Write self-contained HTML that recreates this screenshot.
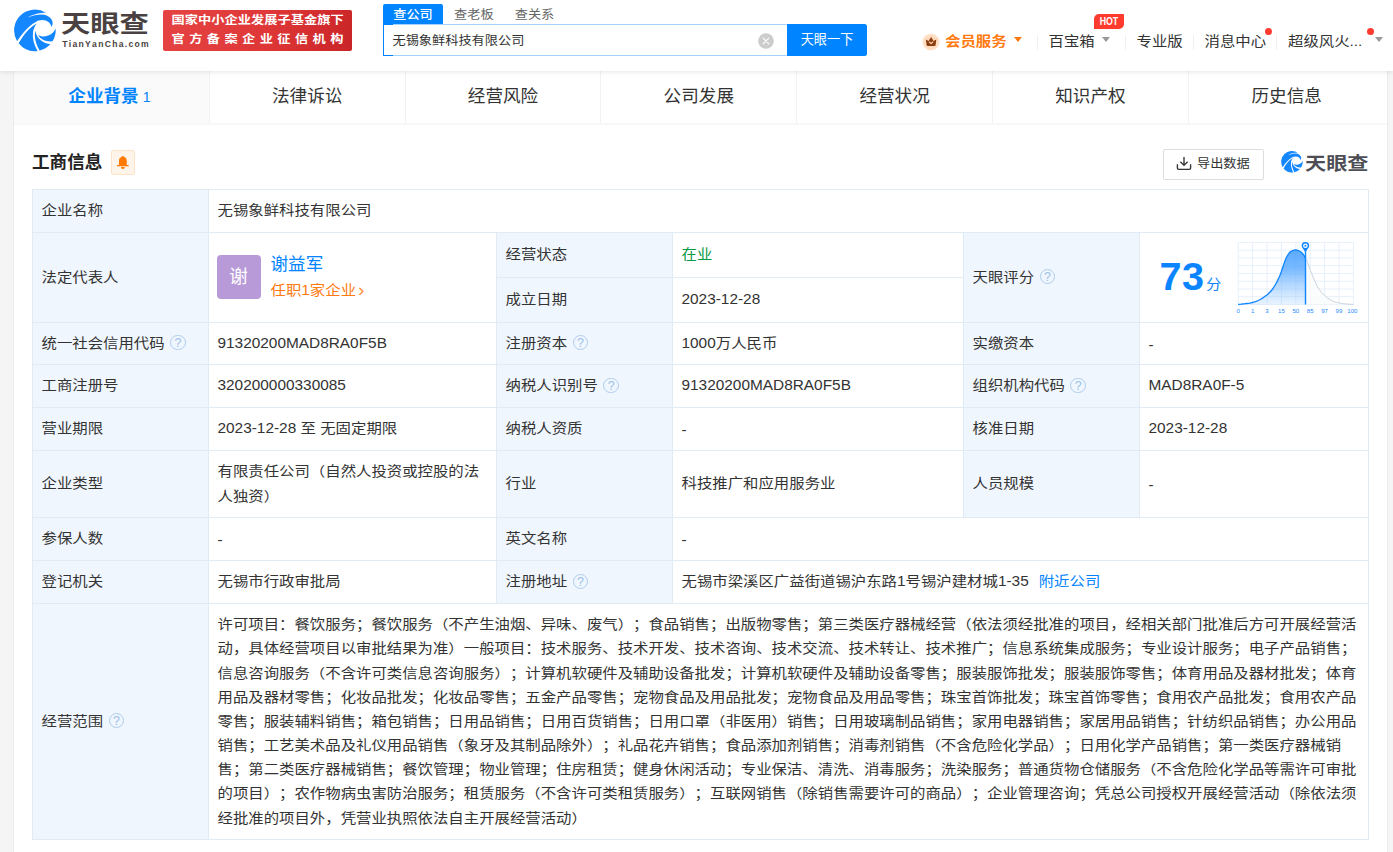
<!DOCTYPE html>
<html lang="zh-CN">
<head>
<meta charset="utf-8">
<title>无锡象鲜科技有限公司 - 天眼查</title>
<style>
*,*:before,*:after{box-sizing:border-box;margin:0;padding:0}
html,body{width:1393px;height:852px;overflow:hidden}
body{background:#f5f5f5;font-family:"Liberation Sans","Noto Sans CJK SC",sans-serif;color:#333;font-size:15.4px;position:relative;text-spacing-trim:space-all;font-kerning:none}
a{text-decoration:none;color:inherit}
.abs{position:absolute}

/* ---------- header ---------- */
#header{position:absolute;left:0;top:0;width:1393px;height:71px;background:#fff;box-shadow:0 1px 5px rgba(0,0,0,.10);z-index:5}
#logo-mark{position:absolute;left:8px;top:4px;width:54px;height:54px}
#logo-cn{position:absolute;left:60.8px;top:5.8px;font-size:24.4px;line-height:36px;font-weight:700;color:#4a4242;letter-spacing:0;white-space:nowrap;transform:scaleX(1.2);transform-origin:0 0}
#logo-en{position:absolute;left:62.3px;top:38px;font-size:8.6px;line-height:12px;font-weight:700;color:#4a4242;letter-spacing:1.28px;white-space:nowrap}
#badge{position:absolute;left:163px;top:10px;width:189px;height:41px;border-radius:2px;background:linear-gradient(105deg,#e54343 0%,#df3737 55%,#c92427 100%);color:#fff;font-weight:700;font-size:13.2px;white-space:nowrap}
#badge .l1{position:absolute;left:8.5px;top:2.2px;line-height:17px;letter-spacing:.06px;transform:scaleY(.87);transform-origin:0 20%}
#badge .l2{position:absolute;left:8.5px;top:21.3px;line-height:17px;letter-spacing:4.45px;transform:scaleY(.87);transform-origin:0 20%}

#stabs{position:absolute;left:383px;top:4px;height:20px;font-size:13.2px;line-height:21px;white-space:nowrap}
#stabs>span{display:inline-block;width:60.6px;text-align:center;color:#666;vertical-align:top}
#stabs>span.on{background:#0084ff;color:#fff;border-radius:2px 2px 0 0;font-weight:500;width:60px;margin-right:.6px}
#sbox{position:absolute;left:383px;top:24px;width:405px;height:32px;border:1px solid #a6d2ff;border-left-color:#0084ff;background:#fff;font-size:13.2px;line-height:32.5px;padding-left:8.5px;color:#333}
#sbox:before{content:"";position:absolute;left:-1px;top:-1px;width:10px;height:32px;border:1px solid #0084ff;border-right:none}
#sclear{position:absolute;left:757.9px;top:32.5px;width:16px;height:16px}
#sbtn{position:absolute;left:787px;top:24px;width:80px;height:32px;background:#0084ff;border-radius:0 2.5px 2.5px 0;color:#fff;font-size:13.2px;line-height:32px;text-align:center}

#nav{position:absolute;left:0;top:0;font-size:15.4px;line-height:22px;white-space:nowrap}
#nav .t{position:absolute;top:30px}
#nav .sep{position:absolute;top:35px;width:1.3px;height:15px;background:#efefef}
#nav .tri{position:absolute;top:37.4px;margin-left:-.3px;width:0;height:0;border-left:4.9px solid transparent;border-right:4.9px solid transparent;border-top:5.9px solid #999}
#nav .dot{position:absolute;width:7px;height:7px;border-radius:50%;background:#ff3b30}
#hot{position:absolute;left:1094px;top:14px;width:30px;height:14.8px;background:#ff3b30;border-radius:5px 1px 5px 0;color:#fff;font-size:8.8px;line-height:14.8px;font-weight:700;text-align:center;letter-spacing:-.1px}
#hot span{display:inline-block;transform:translateY(.4px) scaleY(1.2);transform-origin:50% 60%}

/* ---------- container ---------- */
#wrap{position:absolute;left:13px;top:71px;width:1375px;height:781px;background:#fff;border-left:1px solid #ececec;border-right:1px solid #ececec}
#tabs{position:absolute;left:0;top:0;width:1373px;height:54px;border-bottom:2px solid #f8f8f8;display:flex}
#tabs div{flex:0 0 195.8px;height:52px;border-right:1px solid #f2f2f2;text-align:center;font-size:17.6px;line-height:50px;color:#333;white-space:nowrap}
#tabs div:last-child{border-right:none}
#tabs div.on{background:#fafafa;color:#0084ff;font-weight:700;padding-right:4px}
#tabs div.on small{font-size:14px;font-weight:400;margin-left:4px;position:relative;top:0}

#sec-title{position:absolute;left:18px;top:78px;font-size:17.6px;line-height:26px;font-weight:700;color:#222;white-space:nowrap}
#bell{position:absolute;left:97px;top:79px;width:24px;height:25px;background:#fff4e9;border:1px solid #ffe3c8;border-radius:2px}
#export{position:absolute;left:1149px;top:78px;width:101px;height:31px;border:1px solid #ddd;border-radius:2px;font-size:13.2px;line-height:28px;color:#333;white-space:nowrap}
#wm{position:absolute;left:1266px;top:79px;width:90px;height:26px}
#wm span{position:absolute;left:25px;top:-1.5px;font-size:17.7px;line-height:30px;font-weight:700;color:#4d4e55;letter-spacing:0;white-space:nowrap;transform:scaleX(1.195);transform-origin:0 0}

/* ---------- table ---------- */
#tb{position:absolute;left:18px;top:118px;width:1336px;border-collapse:collapse;table-layout:fixed;font-size:15.4px;line-height:24.2px;color:#333}
#tb td{border:1px solid #e1ebf5;padding:0 8.5px 1px;vertical-align:middle;word-break:break-all}
#tb td.k{background:#f0f6fd}
.q{display:inline-block;width:15.4px;height:15.4px;border:1.4px solid #aecdee;border-radius:50%;color:#9bc1e9;font-size:12.5px;line-height:15.6px;text-align:center;vertical-align:middle;margin-left:5.6px;position:relative;top:-1.1px;overflow:hidden;font-style:normal;font-family:"Liberation Sans",sans-serif}
.blue{color:#0084ff}

.av{position:absolute;left:7.5px;top:21.6px;width:44px;height:44px;border-radius:4px;background:#b99ad9;color:#fff;font-size:18.6px;line-height:44px;text-align:center}
.nm{position:absolute;left:61.5px;top:18px;font-size:17.6px;line-height:26px;white-space:nowrap}
.job{position:absolute;left:61.5px;top:45px;font-size:15.4px;line-height:24px;color:#ff7a10;white-space:nowrap}
.job .ar{margin-left:2px;font-size:19px;line-height:10px;position:relative;top:.5px;opacity:.85}
.score{position:absolute;left:19.5px;top:20px;font-size:39.6px;line-height:46px;font-weight:700;color:#0a84ff;letter-spacing:.6px;font-family:"Liberation Sans",sans-serif}
.fen{position:absolute;left:66px;top:40px;font-size:15.4px;line-height:22px;color:#0f86ff}
.chart{position:absolute;left:94px;top:5px}
.scope{padding-right:9px}

.c{display:inline-block;line-height:1;white-space:nowrap;transform:translateY(-.4px) scaleY(.865);transform-origin:0 84.6%}
.c9{display:inline-block;line-height:1;white-space:nowrap;transform:scaleY(.93);transform-origin:0 84.6%}
.ln{height:24.2px;white-space:nowrap}
.d{position:relative;top:1.7px}
</style>
</head>
<body>
<div id="header">
  <svg id="logo-mark" viewBox="0 0 852 852">
    <g fill="#1487ff">
      <path d="M144,586 A328,328 0 0 1 600.6,139 C520,138 400,158 310,213 C420,170 540,152 610,180 C690,215 732,290 686,364 C674,300 620,254 540,254 C500,254 468,266 438,283 C328,343 216,470 144,586Z"/>
      <path d="M168,620 A328,328 0 0 0 466,741.5 C408,640 382,540 395,440 C402,392 424,342 456,306 C342,364 236,494 168,620Z"/>
      <path d="M499,735.5 A328,328 0 0 0 668,636 C560,630 452,550 430,424 C418,472 420,540 443,610 C458,655 478,697 499,735.5Z"/>
      <path d="M474,488 C560,538 700,508 751.8,388 A328,328 0 0 1 703.7,589 C602,598 512,558 474,488Z"/>
    </g>
  </svg>
  <div id="logo-cn">天眼查</div>
  <div id="logo-en">TianYanCha.com</div>
  <div id="badge"><span class="l1">国家中小企业发展子基金旗下</span><span class="l2">官方备案企业征信机构</span></div>

  <div id="stabs"><span class="on"><span class="c9">查公司</span></span><span><span class="c9">查老板</span></span><span><span class="c9">查关系</span></span></div>
  <div id="sbox"><span class="c9">无锡象鲜科技有限公司</span></div>
  <svg id="sclear" viewBox="0 0 16 16"><circle cx="8" cy="8" r="7.8" fill="#ccc"/><path d="M5.2,5.2 L10.8,10.8 M10.8,5.2 L5.2,10.8" stroke="#fff" stroke-width="1.2" stroke-linecap="round"/></svg>
  <div id="sbtn">天眼一下</div>

  <div id="nav">
    <svg class="abs" style="left:922px;top:33px;width:18px;height:18px" viewBox="0 0 18 18"><defs><radialGradient id="vg"><stop offset="0" stop-color="#ffd6b5"/><stop offset=".75" stop-color="#ffdcc0"/><stop offset="1" stop-color="#ffe6d2"/></radialGradient></defs><circle cx="9" cy="9" r="8.6" fill="url(#vg)"/><path d="M3.9,6.5 L6.6,8.1 L9.1,4.1 L11.6,8.1 L14.3,6.5 L13.6,12 Q13.5,13.1 12.4,13.1 L5.8,13.1 Q4.7,13.1 4.6,12Z" fill="#8a3c0e"/><path d="M7.4,9 L9.1,10.6 L10.8,9" fill="none" stroke="#ffd9bb" stroke-width="1.1" stroke-linecap="round" stroke-linejoin="round"/></svg>
    <span class="t" style="left:945px;color:#ff7a10;font-weight:700"><span class="c">会员服务</span></span>
    <i class="tri" style="left:1014.6px;border-top-color:#ff7a10"></i>
    <i class="sep" style="left:1037px"></i>
    <span class="t" style="left:1048.5px"><span class="c">百宝箱</span></span>
    <i class="tri" style="left:1102.4px"></i>
    <div id="hot"><span>HOT</span></div>
    <i class="sep" style="left:1124.5px"></i>
    <span class="t" style="left:1136.5px"><span class="c">专业版</span></span>
    <i class="sep" style="left:1193px"></i>
    <span class="t" style="left:1204.5px"><span class="c">消息中心</span></span>
    <i class="dot" style="left:1265px;top:28px"></i>
    <i class="sep" style="left:1276px"></i>
    <span class="t" style="left:1288px"><span class="c">超级风火...</span></span>
    <i class="dot" style="left:1367px;top:27.5px"></i>
    <i class="tri" style="left:1374.8px"></i>
  </div>
</div>

<div id="wrap">
  <div id="tabs">
    <div class="on">企业背景<small>1</small></div>
    <div>法律诉讼</div>
    <div>经营风险</div>
    <div>公司发展</div>
    <div>经营状况</div>
    <div>知识产权</div>
    <div>历史信息</div>
  </div>

  <div id="sec-title">工商信息</div>
  <div id="bell"><svg viewBox="0 0 24 24" width="22" height="22" style="display:block"><path d="M11.85,5.1 L13.1,6.2 C15.2,6.9 16.1,8.6 16.1,10.6 L16.1,15.3 L18.2,15.3 L18.2,16.55 L5.4,16.55 L5.4,15.3 L7.6,15.3 L7.6,10.6 C7.6,8.6 8.5,6.9 10.6,6.2Z" fill="#ff7a00"/><path d="M9.7,17.45 L14,17.45 A2.15,2.15 0 0 1 9.7,17.45Z" fill="#ff7a00"/></svg></div>
  <div id="export"><svg class="abs" style="left:12px;top:5.6px" width="16" height="15" viewBox="0 0 16 15"><path d="M8,1 V9.2 M4.4,5.8 L8,9.4 L11.6,5.8 M1.4,8.2 V12 Q1.4,13.4 2.8,13.4 H13.2 Q14.6,13.4 14.6,12 V8.2" fill="none" stroke="#333" stroke-width="1.35"/></svg><span class="abs" style="left:33px;top:0"><span class="c9">导出数据</span></span></div>
  <div id="wm">
    <svg class="abs" style="left:0;top:0;width:24px;height:24px" viewBox="60 60 730 730"><g fill="#1487ff">
      <path d="M144,586 A328,328 0 0 1 600.6,139 C520,138 400,158 310,213 C420,170 540,152 610,180 C690,215 732,290 686,364 C674,300 620,254 540,254 C500,254 468,266 438,283 C328,343 216,470 144,586Z"/>
      <path d="M168,620 A328,328 0 0 0 466,741.5 C408,640 382,540 395,440 C402,392 424,342 456,306 C342,364 236,494 168,620Z"/>
      <path d="M499,735.5 A328,328 0 0 0 668,636 C560,630 452,550 430,424 C418,472 420,540 443,610 C458,655 478,697 499,735.5Z"/>
      <path d="M474,488 C560,538 700,508 751.8,388 A328,328 0 0 1 703.7,589 C602,598 512,558 474,488Z"/></g></svg>
    <span>天眼查</span>
  </div>

  <table id="tb">
    <colgroup><col style="width:176px"><col style="width:288px"><col style="width:176px"><col style="width:291px"><col style="width:176px"><col style="width:229px"></colgroup>
    <tr style="height:43px"><td class="k"><span class="c">企业名称</span></td><td colspan="5"><span class="c">无锡象鲜科技有限公司</span></td></tr>
    <tr style="height:45px"><td class="k" rowspan="2"><span class="c">法定代表人</span></td>
      <td rowspan="2" style="position:relative"><div class="av">谢</div><div class="nm blue">谢益军</div><div class="job"><span class="c">任职</span>1<span class="c">家企业</span><span class="ar">›</span></div></td>
      <td class="k"><span class="c">经营状态</span></td><td style="color:#089944"><span class="c">在业</span></td>
      <td class="k" rowspan="2"><span class="c">天眼评分</span><i class="q">?</i></td>
      <td rowspan="2" style="position:relative;padding:0">
        <div class="score">73</div><div class="fen"><span class="c">分</span></div>
        <svg class="chart" width="130" height="84" viewBox="0 0 130 84">
          <defs><linearGradient id="gf" x1="0" y1="0" x2="0" y2="1"><stop offset="0" stop-color="#3d9bff" stop-opacity=".85"/><stop offset=".35" stop-color="#4ea4ff" stop-opacity=".75"/><stop offset="1" stop-color="#8cc4ff" stop-opacity=".2"/></linearGradient></defs>
          <g stroke="#e7f0fb" stroke-width="1" fill="none"><path d="M4.2,4.4 V66.5"/><path d="M18.6,4.4 V66.5"/><path d="M33.0,4.4 V66.5"/><path d="M47.4,4.4 V66.5"/><path d="M61.8,4.4 V66.5"/><path d="M76.2,4.4 V66.5"/><path d="M90.6,4.4 V66.5"/><path d="M105.0,4.4 V66.5"/><path d="M119.4,4.4 V66.5"/><path d="M4.2,4.4 H119.4"/><path d="M4.2,12.2 H119.4"/><path d="M4.2,19.9 H119.4"/><path d="M4.2,27.7 H119.4"/><path d="M4.2,35.4 H119.4"/><path d="M4.2,43.2 H119.4"/><path d="M4.2,51.0 H119.4"/><path d="M4.2,58.7 H119.4"/><path d="M4.2,66.5 H119.4"/></g>
          <path d="M71.5,20.2 L72.8,22.8 L74.0,25.8 L75.2,29.2 L76.5,32.5 L77.7,35.6 L78.9,38.6 L80.1,41.6 L81.4,44.4 L82.6,46.9 L83.8,49.1 L85.0,51.1 L86.3,52.8 L87.5,54.3 L88.7,55.6 L90.0,56.8 L91.2,58.0 L92.4,59.0 L93.6,60.0 L94.9,60.8 L96.1,61.6 L97.3,62.3 L98.6,62.9 L99.8,63.4 L101.0,63.9 L102.2,64.2 L103.5,64.6 L104.7,64.8 L105.9,65.1 L107.1,65.3 L108.4,65.5 L109.6,65.7 L110.8,65.8 L112.1,65.9 L113.3,66.1 L114.5,66.2 L115.7,66.2 L117.0,66.3 L118.2,66.4 L119.4,66.5 L119.4,66.5 L71.5,66.5Z" fill="#fafbfc" fill-opacity=".85" stroke="none"/>
          <path d="M71.5,20.2 L72.8,22.8 L74.0,25.8 L75.2,29.2 L76.5,32.5 L77.7,35.6 L78.9,38.6 L80.1,41.6 L81.4,44.4 L82.6,46.9 L83.8,49.1 L85.0,51.1 L86.3,52.8 L87.5,54.3 L88.7,55.6 L90.0,56.8 L91.2,58.0 L92.4,59.0 L93.6,60.0 L94.9,60.8 L96.1,61.6 L97.3,62.3 L98.6,62.9 L99.8,63.4 L101.0,63.9 L102.2,64.2 L103.5,64.6 L104.7,64.8 L105.9,65.1 L107.1,65.3 L108.4,65.5 L109.6,65.7 L110.8,65.8 L112.1,65.9 L113.3,66.1 L114.5,66.2 L115.7,66.2 L117.0,66.3 L118.2,66.4 L119.4,66.5" fill="none" stroke="#c9d3dc" stroke-width="1"/>
          <path d="M4.2,66.5 L5.7,66.3 L7.1,66.2 L8.5,66.0 L10.0,65.9 L11.4,65.7 L12.8,65.5 L14.3,65.3 L15.7,65.1 L17.1,64.8 L18.5,64.5 L20.0,64.1 L21.4,63.7 L22.8,63.1 L24.3,62.5 L25.7,61.8 L27.1,61.0 L28.6,60.1 L30.0,59.1 L31.4,58.0 L32.9,56.9 L34.3,55.7 L35.7,54.3 L37.2,52.8 L38.6,51.0 L40.0,48.9 L41.5,46.5 L42.9,43.9 L44.3,41.0 L45.8,37.8 L47.2,34.0 L48.6,29.7 L50.1,25.4 L51.5,21.6 L52.9,18.5 L54.4,16.1 L55.8,14.3 L57.2,13.2 L58.7,12.5 L60.1,12.2 L61.5,12.0 L62.9,12.1 L64.4,12.5 L65.8,13.2 L67.2,14.2 L68.7,15.7 L70.1,17.6 L71.5,20.2 L71.5,66.5 L4.2,66.5Z" fill="url(#gf)" stroke="none"/>
          <path d="M4.2,66.5 L5.7,66.3 L7.1,66.2 L8.5,66.0 L10.0,65.9 L11.4,65.7 L12.8,65.5 L14.3,65.3 L15.7,65.1 L17.1,64.8 L18.5,64.5 L20.0,64.1 L21.4,63.7 L22.8,63.1 L24.3,62.5 L25.7,61.8 L27.1,61.0 L28.6,60.1 L30.0,59.1 L31.4,58.0 L32.9,56.9 L34.3,55.7 L35.7,54.3 L37.2,52.8 L38.6,51.0 L40.0,48.9 L41.5,46.5 L42.9,43.9 L44.3,41.0 L45.8,37.8 L47.2,34.0 L48.6,29.7 L50.1,25.4 L51.5,21.6 L52.9,18.5 L54.4,16.1 L55.8,14.3 L57.2,13.2 L58.7,12.5 L60.1,12.2 L61.5,12.0 L62.9,12.1 L64.4,12.5 L65.8,13.2 L67.2,14.2 L68.7,15.7 L70.1,17.6 L71.5,20.2" fill="none" stroke="#0f86ff" stroke-width="1.3"/>
          <path d="M71.5,11 V66.5" stroke="#0f86ff" stroke-width="1.4"/>
          <path d="M71.4,3.9 a3.8,3.8 0 0 1 3.8,3.8 c0,2.2 -2.5,3.8 -3.8,6.6 c-1.3,-2.8 -3.8,-4.4 -3.8,-6.6 a3.8,3.8 0 0 1 3.8,-3.8Z" fill="#0f86ff"/>
          <circle cx="71.4" cy="7.7" r="2.3" fill="#fff"/><circle cx="71.4" cy="7.7" r="1" fill="#0f86ff"/>
          <g font-family="Liberation Sans, sans-serif" font-size="6.1" fill="#1f8aff"><text x="4.2" y="75" text-anchor="middle">0</text><text x="18.6" y="75" text-anchor="middle">1</text><text x="33.0" y="75" text-anchor="middle">3</text><text x="47.4" y="75" text-anchor="middle">15</text><text x="61.8" y="75" text-anchor="middle">50</text><text x="76.2" y="75" text-anchor="middle">85</text><text x="90.6" y="75" text-anchor="middle">97</text><text x="105.0" y="75" text-anchor="middle">99</text><text x="118.4" y="75" text-anchor="middle">100</text></g>
        </svg>
      </td></tr>
    <tr style="height:45px"><td class="k"><span class="c">成立日期</span></td><td>2023-12-28</td></tr>
    <tr style="height:42px"><td class="k"><span class="c">统一社会信用代码</span><i class="q">?</i></td><td>91320200MAD8RA0F5B</td><td class="k"><span class="c">注册资本</span><i class="q">?</i></td><td>1000<span class="c">万人民币</span></td><td class="k"><span class="c">实缴资本</span></td><td><span class="d">-</span></td></tr>
    <tr style="height:43px"><td class="k"><span class="c">工商注册号</span></td><td>320200000330085</td><td class="k"><span class="c">纳税人识别号</span><i class="q">?</i></td><td>91320200MAD8RA0F5B</td><td class="k"><span class="c">组织机构代码</span><i class="q">?</i></td><td>MAD8RA0F-5</td></tr>
    <tr style="height:43px"><td class="k"><span class="c">营业期限</span></td><td>2023-12-28 <span class="c">至</span> <span class="c">无固定期限</span></td><td class="k"><span class="c">纳税人资质</span></td><td><span class="d">-</span></td><td class="k"><span class="c">核准日期</span></td><td>2023-12-28</td></tr>
    <tr style="height:67px"><td class="k"><span class="c">企业类型</span></td><td><span class="c">有限责任公司（自然人投资或控股的法</span><br><span class="c">人独资）</span></td><td class="k"><span class="c">行业</span></td><td><span class="c">科技推广和应用服务业</span></td><td class="k"><span class="c">人员规模</span></td><td><span class="d">-</span></td></tr>
    <tr style="height:43px"><td class="k"><span class="c">参保人数</span></td><td><span class="d">-</span></td><td class="k"><span class="c">英文名称</span></td><td colspan="3"><span class="d">-</span></td></tr>
    <tr style="height:43px"><td class="k"><span class="c">登记机关</span></td><td><span class="c">无锡市行政审批局</span></td><td class="k"><span class="c">注册地址</span><i class="q">?</i></td><td colspan="3"><span class="c">无锡市梁溪区广益街道锡沪东路</span>1<span class="c">号锡沪建材城</span>1-35<span class="blue" style="margin-left:10px"><span class="c">附近公司</span></span></td></tr>
    <tr style="height:236px"><td class="k"><span class="c">经营范围</span><i class="q">?</i></td><td colspan="5" class="scope"><div class="ln"><span class="c">许可项目：餐饮服务；餐饮服务（不产生油烟、异味、废气）；食品销售；出版物零售；第三类医疗器械经营（依法须经批准的项目，经相关部门批准后方可开展经营活</span></div><div class="ln"><span class="c">动，具体经营项目以审批结果为准）一般项目：技术服务、技术开发、技术咨询、技术交流、技术转让、技术推广；信息系统集成服务；专业设计服务；电子产品销售；</span></div><div class="ln"><span class="c">信息咨询服务（不含许可类信息咨询服务）；计算机软硬件及辅助设备批发；计算机软硬件及辅助设备零售；服装服饰批发；服装服饰零售；体育用品及器材批发；体育</span></div><div class="ln"><span class="c">用品及器材零售；化妆品批发；化妆品零售；五金产品零售；宠物食品及用品批发；宠物食品及用品零售；珠宝首饰批发；珠宝首饰零售；食用农产品批发；食用农产品</span></div><div class="ln"><span class="c">零售；服装辅料销售；箱包销售；日用品销售；日用百货销售；日用口罩（非医用）销售；日用玻璃制品销售；家用电器销售；家居用品销售；针纺织品销售；办公用品</span></div><div class="ln"><span class="c">销售；工艺美术品及礼仪用品销售（象牙及其制品除外）；礼品花卉销售；食品添加剂销售；消毒剂销售（不含危险化学品）；日用化学产品销售；第一类医疗器械销</span></div><div class="ln"><span class="c">售；第二类医疗器械销售；餐饮管理；物业管理；住房租赁；健身休闲活动；专业保洁、清洗、消毒服务；洗染服务；普通货物仓储服务（不含危险化学品等需许可审批</span></div><div class="ln"><span class="c">的项目）；农作物病虫害防治服务；租赁服务（不含许可类租赁服务）；互联网销售（除销售需要许可的商品）；企业管理咨询；凭总公司授权开展经营活动（除依法须</span></div><div class="ln"><span class="c">经批准的项目外，凭营业执照依法自主开展经营活动）</span></div></td></tr>
  </table>
</div>
</body>
</html>
